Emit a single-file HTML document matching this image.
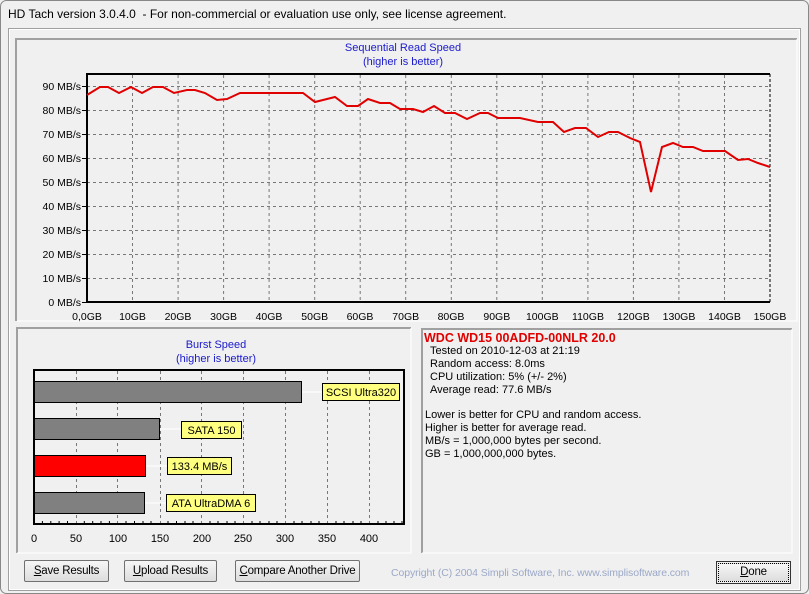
<!DOCTYPE html>
<html><head><meta charset="utf-8"><style>
html,body{margin:0;padding:0}
body{width:809px;height:594px;background:#f0f0f0;position:relative;overflow:hidden;font-family:"Liberation Sans",sans-serif}
.t{position:absolute;white-space:nowrap}
.btn{position:absolute;height:22px;border:1px solid #707070;border-radius:2px;background:linear-gradient(#f6f6f6,#dddddd);font-size:11.5px;text-align:center;line-height:21px;color:#000;box-sizing:border-box;white-space:nowrap;letter-spacing:-0.2px}
.btn u{text-decoration:underline}
</style></head><body>
<div class="t" style="left:8px;top:7px;font-size:12px;color:#000">HD Tach version 3.0.4.0 &nbsp;- For non-commercial or evaluation use only, see license agreement.</div>
<svg width="809" height="594" style="position:absolute;left:0;top:0" font-family="Liberation Sans, sans-serif">
<rect x="0.5" y="0.5" width="808" height="593" rx="6" fill="none" stroke="#888" />
<rect x="8.5" y="28.5" width="792" height="562" fill="none" stroke="#a0a0a0"/>
<rect x="9.5" y="29.5" width="790" height="560" fill="none" stroke="#fff"/>
<path d="M16 321V39H797" stroke="#a0a0a0" stroke-width="2" fill="none"/>
<path d="M17 321H797V39" stroke="#fff" stroke-width="1" fill="none"/>
<text x="403" y="51" font-size="11" fill="#1a1acc" text-anchor="middle">Sequential Read Speed</text>
<text x="403" y="65" font-size="11" fill="#1a1acc" text-anchor="middle">(higher is better)</text>
<g stroke="#777" stroke-dasharray="3,3" stroke-width="1">
<path d="M132.5 75V302M178.1 75V302M223.6 75V302M269.1 75V302M314.7 75V302M360.2 75V302M405.7 75V302M451.3 75V302M496.8 75V302M542.3 75V302M587.9 75V302M633.4 75V302M678.9 75V302M724.5 75V302"/>
<path d="M87 278.5H770M87 254.5H770M87 230.5H770M87 206.5H770M87 182.5H770M87 158.5H770M87 134.5H770M87 110.5H770M87 86.5H770"/>
</g>
<path d="M87 302V74H770" stroke="#000" stroke-width="2" fill="none"/>
<path d="M770 74V302" stroke="#000" stroke-width="1" stroke-dasharray="3,2"/>
<path d="M86 302H770" stroke="#000" stroke-width="2"/>
<g stroke="#000"><path d="M82 302.5H87M82 278.5H87M82 254.5H87M82 230.5H87M82 206.5H87M82 182.5H87M82 158.5H87M82 134.5H87M82 110.5H87M82 86.5H87"/></g>
<polyline fill="none" stroke="#e00000" stroke-width="2" points="87,95 100,87 108,87 119,93 131,87 142,93 153,87 163,87 174,93 187,90 195,90 205,93 217,100 227,99 240,93 303,93 315,102 335,97 347,106 358,106 368,99 380,103 390,103 400,109 413,109 423,112 434,106 445,113 455,113 467,119 480,113 488,113 498,118 520,118 538,122 553,122 564,132 575,128 586,128 598,137 609,132 618,132 630,138 640,142 651,192 662,147 673,143 683,147 693,147 703,151 725,151 738,160 748,159 758,163 770,167"/>
<g font-size="10.5" fill="#000" text-anchor="end">
<text x="81" y="306">0 MB/s</text><text x="81" y="282">10 MB/s</text><text x="81" y="258">20 MB/s</text><text x="81" y="234">30 MB/s</text><text x="81" y="210">40 MB/s</text><text x="81" y="186">50 MB/s</text><text x="81" y="162">60 MB/s</text><text x="81" y="138">70 MB/s</text><text x="81" y="114">80 MB/s</text><text x="81" y="90">90 MB/s</text>
</g>
<g font-size="10.5" fill="#000" text-anchor="middle">
<text x="87" y="320">0,0GB</text><text x="132.5" y="320">10GB</text><text x="178" y="320">20GB</text><text x="223.6" y="320">30GB</text><text x="269" y="320">40GB</text><text x="314.7" y="320">50GB</text><text x="360" y="320">60GB</text><text x="405.7" y="320">70GB</text><text x="451" y="320">80GB</text><text x="496.8" y="320">90GB</text><text x="542.3" y="320">100GB</text><text x="588" y="320">110GB</text><text x="633.4" y="320">120GB</text><text x="679" y="320">130GB</text><text x="724.5" y="320">140GB</text><text x="770" y="320">150GB</text>
</g>
<path d="M17 553V328H411" stroke="#a0a0a0" stroke-width="2" fill="none"/>
<path d="M17 553H411V328" stroke="#fff" fill="none"/>
<text x="216" y="348" font-size="11" fill="#1a1acc" text-anchor="middle">Burst Speed</text>
<text x="216" y="362" font-size="11" fill="#1a1acc" text-anchor="middle">(higher is better)</text>
<g stroke="#777" stroke-dasharray="3,3"><path d="M76.5 371V524M117.5 371V524M160.5 371V524M201.5 371V524M243.5 371V524M285.5 371V524M327.5 371V524M369.5 371V524"/></g>
<g stroke="#fff"><path d="M301 392H322M160 429H181M146 466H167M145 503H166"/></g>
<rect x="34.5" y="381.5" width="267" height="21" fill="#808080" stroke="#000"/>
<rect x="34.5" y="418.5" width="125" height="21" fill="#808080" stroke="#000"/>
<rect x="34.5" y="455.5" width="111" height="21" fill="#ff0000" stroke="#000"/>
<rect x="34.5" y="492.5" width="110" height="21" fill="#808080" stroke="#000"/>
<g fill="#ffff80" stroke="#000"><rect x="322.5" y="383.5" width="77" height="17"/><rect x="181.5" y="421.5" width="60" height="17"/><rect x="167.5" y="457.5" width="64" height="17"/><rect x="166.5" y="494.5" width="89" height="17"/></g>
<g font-size="11" fill="#000" text-anchor="middle"><text x="361" y="396">SCSI Ultra320</text><text x="211.5" y="434">SATA 150</text><text x="199.5" y="470">133.4 MB/s</text><text x="211" y="507">ATA UltraDMA 6</text></g>
<path d="M34 524V370H404V524Z" stroke="#000" stroke-width="2" fill="none"/>
<g stroke="#000"><path d="M42.4 524V521M50.8 524V521M59.1 524V521M67.5 524V521M84.3 524V521M92.7 524V521M101 524V521M109.4 524V521M126 524V521M134.5 524V521M143 524V521M151 524V521M168 524V521M176.5 524V521M185 524V521M193 524V521M210 524V521M218 524V521M227 524V521M235 524V521M252 524V521M260 524V521M269 524V521M277 524V521M294 524V521M302 524V521M311 524V521M319 524V521M336 524V521M344 524V521M353 524V521M361 524V521M378 524V521M386 524V521M394 524V521M402 524V521"/></g>
<g font-size="11" fill="#000" text-anchor="middle"><text x="34" y="542">0</text><text x="76" y="542">50</text><text x="118" y="542">100</text><text x="160" y="542">150</text><text x="202" y="542">200</text><text x="243" y="542">250</text><text x="285" y="542">300</text><text x="327" y="542">350</text><text x="369" y="542">400</text></g>
<path d="M422 553V329H792" stroke="#a0a0a0" stroke-width="2" fill="none"/>
<path d="M422 553H792V329" stroke="#fff" fill="none"/>
<rect x="716.5" y="561.5" width="74" height="22" fill="none" stroke="#333"/>
</svg>
<div class="t" style="left:424px;top:331px;font-size:12.5px;font-weight:bold;color:#e00000">WDC WD15 00ADFD-00NLR 20.0</div>
<div class="t" style="left:430px;top:345px;font-size:11px;line-height:13px;color:#000">Tested on 2010-12-03 at 21:19<br>Random access: 8.0ms<br>CPU utilization: 5% (+/- 2%)<br>Average read: 77.6 MB/s</div>
<div class="t" style="left:425px;top:409px;font-size:11px;line-height:13px;color:#000">Lower is better for CPU and random access.<br>Higher is better for average read.<br>MB/s = 1,000,000 bytes per second.<br>GB = 1,000,000,000 bytes.</div>
<div class="btn" style="left:24px;top:560px;width:85px"><u>S</u>ave Results</div>
<div class="btn" style="left:124px;top:560px;width:93px"><u>U</u>pload Results</div>
<div class="btn" style="left:235px;top:560px;width:125px"><u>C</u>ompare Another Drive</div>
<div class="t" style="left:391px;top:567px;font-size:10.5px;letter-spacing:-0.1px;color:#9aa8c8">Copyright (C) 2004 Simpli Software, Inc. www.simplisoftware.com</div>
<div class="btn" style="left:718px;top:563px;width:71px;height:19px;line-height:17px;border:1px dotted #000;border-radius:0"><u>D</u>one</div>
</body></html>
